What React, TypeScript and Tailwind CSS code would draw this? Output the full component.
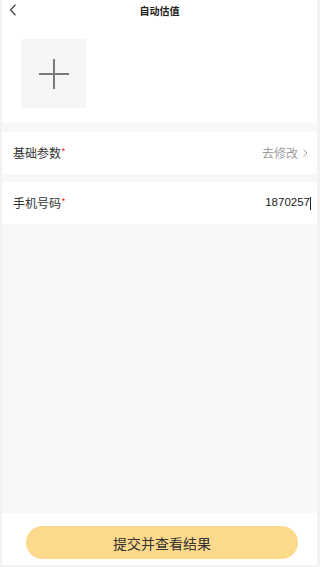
import React from "react";

export default function App() {
  return (
    <div
      className="w-[320px] h-[567px] bg-[#f7f7f7] flex flex-col overflow-hidden border-l-2 border-r-[3px] border-b-2 border-[#f2f2f2]"
      style={{ fontFamily: '"Noto Sans CJK SC", "Noto Sans", sans-serif' }}
    >
      <div className="bg-white h-[123px] flex flex-col shrink-0">
        <div className="h-[22px] relative flex items-center justify-center">
          <svg
            className="absolute left-[7px] top-[4px]"
            width="8"
            height="12"
            viewBox="0 0 8 12"
            fill="none"
          >
            <path d="M6.5 0.8 L1.5 6 L6.5 11.2" stroke="#444" strokeWidth="1.3" />
          </svg>
          <span className="text-[10px] font-bold text-[#222] leading-none">自动估值</span>
        </div>
        <div className="pl-[19px] pt-[17px]">
          <div className="w-[65px] h-[69px] bg-[#f5f5f5] flex items-center justify-center">
            <svg width="30" height="30" viewBox="0 0 30 30">
              <rect x="0" y="14" width="30" height="2" fill="#7a7a7a" />
              <rect x="14" y="0" width="2" height="30" fill="#7a7a7a" />
            </svg>
          </div>
        </div>
      </div>
      <div className="h-[9px] shrink-0" />
      <div className="bg-white h-[42px] flex items-center justify-between pl-[11px] pr-[9px] shrink-0">
        <div className="text-[12px] text-[#333] leading-none">
          基础参数<span className="text-[#e33] text-[10px] align-top">*</span>
        </div>
        <div className="flex items-center gap-[5px] text-[12px] text-[#a0a0a0] leading-none">
          <span>去修改</span>
          <svg width="5" height="8" viewBox="0 0 5 8" fill="none">
            <path d="M0.8 0.6 L4 4 L0.8 7.4" stroke="#999" strokeWidth="1" />
          </svg>
        </div>
      </div>
      <div className="h-[8px] shrink-0" />
      <div className="bg-white h-[42px] flex items-center justify-between pl-[11px] pr-[6px] shrink-0">
        <div className="text-[12px] text-[#333] leading-none">
          手机号码<span className="text-[#e33] text-[10px] align-top">*</span>
        </div>
        <div
          className="flex items-center text-[11.5px] text-[#222] leading-none"
          style={{ fontFamily: '"Liberation Sans", Arial, sans-serif' }}
        >
          <span>1870257</span>
          <span className="w-px h-[13px] bg-[#222]" />
        </div>
      </div>
      <div className="flex-1" />
      <div className="bg-white h-[52px] shrink-0 flex items-start pl-[24px] pt-[13px]">
        <button className="w-[272px] h-[33px] rounded-full bg-[#fdd98b] text-[14px] text-[#333] leading-none">
          提交并查看结果
        </button>
      </div>
    </div>
  );
}
